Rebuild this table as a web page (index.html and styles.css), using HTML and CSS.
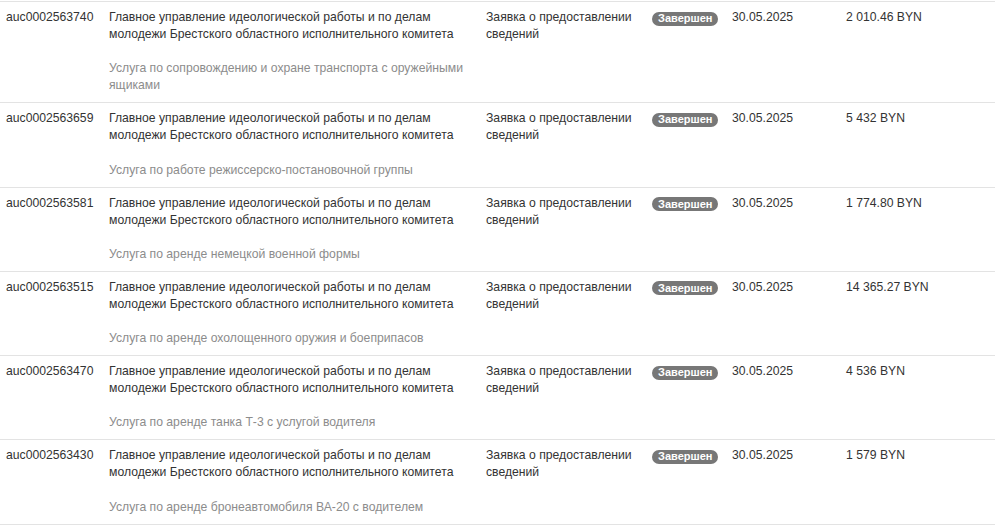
FILE: index.html
```html
<!DOCTYPE html>
<html lang="ru">
<head>
<meta charset="utf-8">
<title>Аукционы</title>
<link rel="stylesheet" href="styles.css">
</head>
<body>
<div class="list">
  <div class="row">
    <div class="cell id">auc0002563740</div>
    <div class="cell org">
      <div class="org-name">Главное управление идеологической работы и по делам молодежи Брестского областного исполнительного комитета</div>
      <div class="desc">Услуга по сопровождению и охране транспорта с оружейными ящиками</div>
    </div>
    <div class="cell type">Заявка о предоставлении сведений</div>
    <div class="cell status"><span class="badge">Завершен</span></div>
    <div class="cell date">30.05.2025</div>
    <div class="cell price">2 010.46 BYN</div>
  </div>
  <div class="row">
    <div class="cell id">auc0002563659</div>
    <div class="cell org">
      <div class="org-name">Главное управление идеологической работы и по делам молодежи Брестского областного исполнительного комитета</div>
      <div class="desc">Услуга по работе режиссерско-постановочной группы</div>
    </div>
    <div class="cell type">Заявка о предоставлении сведений</div>
    <div class="cell status"><span class="badge">Завершен</span></div>
    <div class="cell date">30.05.2025</div>
    <div class="cell price">5 432 BYN</div>
  </div>
  <div class="row">
    <div class="cell id">auc0002563581</div>
    <div class="cell org">
      <div class="org-name">Главное управление идеологической работы и по делам молодежи Брестского областного исполнительного комитета</div>
      <div class="desc">Услуга по аренде немецкой военной формы</div>
    </div>
    <div class="cell type">Заявка о предоставлении сведений</div>
    <div class="cell status"><span class="badge">Завершен</span></div>
    <div class="cell date">30.05.2025</div>
    <div class="cell price">1 774.80 BYN</div>
  </div>
  <div class="row">
    <div class="cell id">auc0002563515</div>
    <div class="cell org">
      <div class="org-name">Главное управление идеологической работы и по делам молодежи Брестского областного исполнительного комитета</div>
      <div class="desc">Услуга по аренде охолощенного оружия и боеприпасов</div>
    </div>
    <div class="cell type">Заявка о предоставлении сведений</div>
    <div class="cell status"><span class="badge">Завершен</span></div>
    <div class="cell date">30.05.2025</div>
    <div class="cell price">14 365.27 BYN</div>
  </div>
  <div class="row">
    <div class="cell id">auc0002563470</div>
    <div class="cell org">
      <div class="org-name">Главное управление идеологической работы и по делам молодежи Брестского областного исполнительного комитета</div>
      <div class="desc">Услуга по аренде танка Т-3 с услугой водителя</div>
    </div>
    <div class="cell type">Заявка о предоставлении сведений</div>
    <div class="cell status"><span class="badge">Завершен</span></div>
    <div class="cell date">30.05.2025</div>
    <div class="cell price">4 536 BYN</div>
  </div>
  <div class="row">
    <div class="cell id">auc0002563430</div>
    <div class="cell org">
      <div class="org-name">Главное управление идеологической работы и по делам молодежи Брестского областного исполнительного комитета</div>
      <div class="desc">Услуга по аренде бронеавтомобиля ВА-20 с водителем</div>
    </div>
    <div class="cell type">Заявка о предоставлении сведений</div>
    <div class="cell status"><span class="badge">Завершен</span></div>
    <div class="cell date">30.05.2025</div>
    <div class="cell price">1 579 BYN</div>
  </div>
</div>
</body>
</html>
```
FILE: styles.css
```css
html, body {
  margin: 0;
  padding: 0;
  background: #fff;
}
body {
  font-family: "Liberation Sans", Arial, sans-serif;
  font-size: 12.2px;
  line-height: 17px;
  color: #333;
}
.list {
  width: 995px;
  padding-top: 1px;
}
.row {
  display: grid;
  grid-template-columns: 103px 377px 166px 80px 114px 155px;
  border-top: 1px solid #e3e3e3;
}
.row:last-child {
  border-bottom: 1px solid #e3e3e3;
}
.cell {
  padding: 7px 6px 8px 6px;
}
.desc {
  margin-top: 17.3px;
  color: #8c8c8c;
}
.status {
  padding-top: 8px;
}
.badge {
  display: inline-block;
  background: #777;
  color: #fff;
  font-weight: bold;
  font-size: 11px;
  line-height: 1;
  padding: 1.5px 6px 1.5px;
  border-radius: 8px;
}
```
